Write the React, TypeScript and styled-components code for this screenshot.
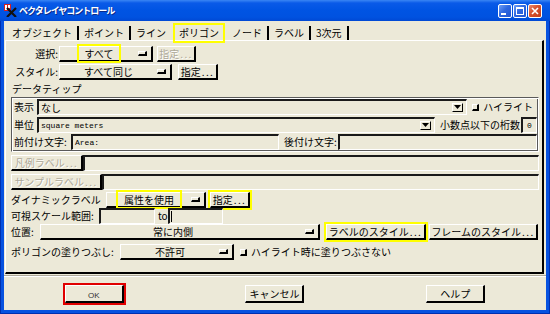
import React from 'react';
import styled, { createGlobalStyle, css } from 'styled-components';

const Global = createGlobalStyle`
  html, body { margin: 0; padding: 0; width: 550px; height: 314px; overflow: hidden; background: #fff; }
  #root { width: 550px; height: 314px; }
  * { box-sizing: border-box; }
`;

const JP = `"Noto Sans CJK JP", "Noto Sans", sans-serif`;
const MONO = `"Liberation Mono", "DejaVu Sans Mono", monospace`;

const raised = css`
  background: #ece9d8;
  border-style: solid;
  border-width: 1px 2px 2px 1px;
  border-color: #fff #000 #000 #fff;
`;

const sunken = css`
  background: #ece9d8;
  border-style: solid;
  border-width: 2px 1px 1px 2px;
  border-color: #1a1a1a #fff #fff #1a1a1a;
`;

const Window = styled.div`
  width: 550px;
  height: 314px;
  display: flex;
  flex-direction: column;
  background: #0752e0;
  box-shadow: inset 1px 0 0 #0030b0, inset -1px 0 0 #0030b0, inset 0 -1px 0 #0030b0;
  font-family: ${JP};
  font-size: 10px;
  color: #000;
`;

const TitleBar = styled.div`
  height: 21px;
  flex: none;
  display: flex;
  align-items: center;
  padding: 0 8px 0 4px;
  background: linear-gradient(180deg, #3a86f4 0px, #0a5ae8 3px, #0054e3 10px, #0052e0 17px, #0048d4 21px);
`;

const TitleText = styled.span`
  margin-left: 2px;
  color: #fff;
  font-weight: bold;
  font-size: 9px;
  letter-spacing: -1px;
  text-shadow: 1px 1px 0 #0a2a8a;
  flex: 1;
  white-space: nowrap;
`;

const CaptionGroup = styled.div`
  display: flex;
  gap: 1px;
`;

const CaptionBtn = styled.div<{ $close?: boolean }>`
  width: 14px;
  height: 14px;
  border: 1px solid #fff;
  border-radius: 2px;
  background: ${(p) =>
    p.$close
      ? 'linear-gradient(135deg, #e98a6e 0%, #d6502c 45%, #c2401c 100%)'
      : 'linear-gradient(135deg, #6f9ef5 0%, #2f68e0 45%, #1f54d2 100%)'};
  display: flex;
  align-items: center;
  justify-content: center;
`;

const Client = styled.div`
  flex: 1;
  margin: 0 4px 4px 4px;
  background: #ece9d8;
  display: flex;
  flex-direction: column;
`;

const TabsRow = styled.div`
  height: 19px;
  flex: none;
  display: flex;
  align-items: flex-end;
  padding-left: 3px;
`;

const Tab = styled.div<{ $sep?: boolean; $selected?: boolean }>`
  height: ${(p) => (p.$selected ? 20 : 14)}px;
  line-height: ${(p) => (p.$selected ? 20 : 14)}px;
  padding: 0 ${(p) => (p.$selected ? 6 : 5)}px;
  margin: 0 ${(p) => (p.$selected ? 2 : 0)}px ${(p) => (p.$selected ? -3 : 0)}px;
  border-right: ${(p) => (p.$sep ? '2px solid #000' : 'none')};
  box-shadow: ${(p) => (p.$selected ? 'inset 0 0 0 2px #ffff00' : 'none')};
  position: relative;
  z-index: ${(p) => (p.$selected ? 2 : 0)};
  white-space: nowrap;
`;

const Panel = styled.div`
  height: 234px;
  flex: none;
  margin: 0 2px 0 1px;
  border-style: solid;
  border-width: 1px 2px 2px 1px;
  border-color: #fff #000 #000 #fff;
  padding: 0 3px 0 5px;
  display: flex;
  flex-direction: column;
`;

const Row = styled.div<{ $mt?: number }>`
  display: flex;
  align-items: center;
  height: 16px;
  flex: none;
  margin-top: ${(p) => p.$mt ?? 0}px;
`;

const Label = styled.span<{ $w?: number; $ml?: number; $right?: boolean }>`
  white-space: nowrap;
  flex: none;
  line-height: 16px;
  ${(p) => (p.$w ? `width: ${p.$w}px;` : '')}
  margin-left: ${(p) => p.$ml ?? 0}px;
  text-align: ${(p) => (p.$right ? 'right' : 'left')};
`;

const SectionLabel = styled.div`
  height: 16px;
  line-height: 16px;
  padding-left: 1px;
  padding-top: 1px;
  flex: none;
`;

const OptionMenu = styled.div<{ $w: number; $ml?: number }>`
  ${raised};
  width: ${(p) => p.$w}px;
  margin-left: ${(p) => p.$ml ?? 0}px;
  height: 16px;
  flex: none;
  display: flex;
  align-items: center;
`;

const OptionTextArea = styled.div`
  flex: 1;
  display: flex;
  justify-content: center;
  align-items: center;
  height: 100%;
`;

const OptionText = styled.span<{ $mark?: boolean }>`
  white-space: nowrap;
  line-height: 13px;
  padding: 0 ${(p) => (p.$mark ? 5 : 0)}px;
  outline: ${(p) => (p.$mark ? '2px solid #ffff00' : 'none')};
  outline-offset: 1px;
`;

const Indicator = styled.span`
  width: 9px;
  height: 5px;
  flex: none;
  margin-right: 4px;
  border-style: solid;
  border-width: 1px 2px 2px 1px;
  border-color: #fff #000 #000 #fff;
`;

const PushButton = styled.div<{ $ml?: number; $w: number; $disabled?: boolean; $mark?: boolean }>`
  ${raised};
  height: 16px;
  line-height: 13px;
  width: ${(p) => p.$w}px;
  text-align: center;
  overflow: hidden;
  margin-left: ${(p) => p.$ml ?? 0}px;
  flex: none;
  white-space: nowrap;
  color: ${(p) => (p.$disabled ? '#aca899' : '#000')};
  text-shadow: ${(p) => (p.$disabled ? '1px 1px 0 #fff' : 'none')};
  outline: ${(p) => (p.$mark ? '2px solid #ffff00' : 'none')};
  outline-offset: 0;
`;

const Dots = styled.span`
  letter-spacing: 1.4px;
  margin-left: 1px;
`;

const Field = styled.div<{ $w?: number; $ml?: number }>`
  ${sunken};
  height: 16px;
  ${(p) => (p.$w ? `width: ${p.$w}px; flex: none;` : 'flex: 1; min-width: 0;')}
  margin-left: ${(p) => p.$ml ?? 0}px;
  display: flex;
  align-items: center;
  overflow: hidden;
`;

const FieldText = styled.span<{ $mono?: boolean; $center?: boolean }>`
  padding-left: 2px;
  white-space: nowrap;
  font-family: ${(p) => (p.$mono ? MONO : JP)};
  font-size: ${(p) => (p.$mono ? 8 : 10)}px;
  ${(p) => (p.$center ? 'flex: 1; text-align: center; padding-left: 0;' : '')}
`;

const Caret = styled.span`
  width: 1px;
  height: 11px;
  background: #000;
  margin-left: 1px;
`;

const ComboArrow = styled.span`
  width: 11px;
  height: 9px;
  margin-left: auto;
  margin-right: 3px;
  flex: none;
  border-style: solid;
  border-width: 1px;
  border-color: #fff #000 #000 #fff;
  display: flex;
  align-items: center;
  justify-content: center;
  background: #ece9d8;
`;

const Check = styled.span<{ $ml?: number }>`
  width: 7px;
  height: 7px;
  flex: none;
  margin-left: ${(p) => p.$ml ?? 0}px;
  margin-right: 4px;
  border-style: solid;
  border-width: 1px 2px 2px 1px;
  border-color: #fff #000 #000 #fff;
`;

const Frame = styled.div`
  margin-top: 1px;
  flex: none;
  border: 1px solid;
  border-color: #5a5a5a #fff #fff #5a5a5a;
  box-shadow: inset 1px 1px 0 #fff, inset -1px -1px 0 #5a5a5a;
  padding: 1px 1px 1px 2px;
  display: flex;
  flex-direction: column;
`;

const Separator = styled.div`
  margin-top: 1px;
  height: 2px;
  flex: none;
  border-top: 1px solid #aca899;
  border-bottom: 1px solid #fff;
`;

const ButtonRow = styled.div`
  flex: 1;
  display: flex;
  align-items: center;
  justify-content: space-around;
`;

const DialogButton = styled.div<{ $focus?: boolean }>`
  ${raised};
  width: 59px;
  height: 18px;
  line-height: 15px;
  text-align: center;
  white-space: nowrap;
  outline: ${(p) => (p.$focus ? '2px solid #e00000' : 'none')};
  outline-offset: 0;
`;

const OkText = styled.span`
  font-family: "Liberation Sans", Arial, sans-serif;
  font-size: 8px;
  color: #333;
`;

const TitleIcon = () => (
  <svg width="13" height="13" viewBox="0 0 13 13">
    <rect x="0" y="0" width="7" height="7" fill="#d42020" />
    <rect x="1" y="1" width="2" height="5" fill="#fff" />
    <rect x="4" y="1" width="2" height="3" fill="#fff" />
    <path d="M3 4 L12 13 M12 4 L3 13" stroke="#111" strokeWidth="2.2" />
  </svg>
);

const ArrowDown = () => (
  <svg width="7" height="5" viewBox="0 0 7 5">
    <path d="M0 0 H7 L3.5 4 Z" fill="#000" />
  </svg>
);

const Dlg = ({ children }: { children: React.ReactNode }) => (
  <>
    {children}
    <Dots>...</Dots>
  </>
);

export default function App() {
  return (
    <>
      <Global />
      <Window>
        <TitleBar>
          <TitleIcon />
          <TitleText>ベクタレイヤコントロール</TitleText>
          <CaptionGroup>
            <CaptionBtn>
              <svg width="12" height="12" viewBox="0 0 12 12">
                <rect x="2" y="8" width="5" height="2" fill="#fff" />
              </svg>
            </CaptionBtn>
            <CaptionBtn>
              <svg width="12" height="12" viewBox="0 0 12 12">
                <rect x="2.5" y="2.5" width="7" height="7" fill="none" stroke="#fff" strokeWidth="1" />
                <rect x="2" y="2" width="8" height="2" fill="#fff" />
              </svg>
            </CaptionBtn>
            <CaptionBtn $close>
              <svg width="12" height="12" viewBox="0 0 12 12">
                <path d="M3 3 L9 9 M9 3 L3 9" stroke="#fff" strokeWidth="1.6" />
              </svg>
            </CaptionBtn>
          </CaptionGroup>
        </TitleBar>
        <Client>
          <TabsRow>
            <Tab $sep>オブジェクト</Tab>
            <Tab $sep>ポイント</Tab>
            <Tab>ライン</Tab>
            <Tab $selected>ポリゴン</Tab>
            <Tab $sep>ノード</Tab>
            <Tab $sep>ラベル</Tab>
            <Tab $sep>3次元</Tab>
          </TabsRow>
          <Panel>
            <Row $mt={5}>
              <Label $w={47} $right>選択:</Label>
              <OptionMenu $w={94} $ml={1}>
                <OptionTextArea>
                  <OptionText $mark>すべて</OptionText>
                </OptionTextArea>
                <Indicator />
              </OptionMenu>
              <PushButton $ml={4} $w={39} $disabled>
                <Dlg>指定</Dlg>
              </PushButton>
            </Row>
            <Row $mt={2}>
              <Label $w={47} $right>スタイル:</Label>
              <OptionMenu $w={113} $ml={1}>
                <OptionTextArea>
                  <OptionText>すべて同じ</OptionText>
                </OptionTextArea>
                <Indicator />
              </OptionMenu>
              <PushButton $ml={6} $w={40}>
                <Dlg>指定</Dlg>
              </PushButton>
            </Row>
            <SectionLabel>データティップ</SectionLabel>
            <Frame>
              <Row>
                <Label $w={23}>表示</Label>
                <Field>
                  <FieldText>なし</FieldText>
                  <ComboArrow>
                    <ArrowDown />
                  </ComboArrow>
                </Field>
                <Check $ml={5} />
                <Label>ハイライト</Label>
                <Label $w={4} />
              </Row>
              <Row $mt={2}>
                <Label $w={23}>単位</Label>
                <Field>
                  <FieldText $mono>square meters</FieldText>
                  <ComboArrow>
                    <ArrowDown />
                  </ComboArrow>
                </Field>
                <Label $ml={5}>小数点以下の桁数</Label>
                <Field $w={16} $ml={1}>
                  <FieldText $mono $center>0</FieldText>
                </Field>
              </Row>
              <Row $mt={1}>
                <Label $w={57}>前付け文字:</Label>
                <Field $w={208}>
                  <FieldText $mono>Area:</FieldText>
                </Field>
                <Label $ml={5}>後付け文字:</Label>
                <Field $ml={1} />
              </Row>
            </Frame>
            <Row $mt={3}>
              <PushButton $w={72} $disabled>
                <Dlg>凡例ラベル</Dlg>
              </PushButton>
              <Field />
            </Row>
            <Row $mt={3}>
              <PushButton $w={91} $disabled>
                <Dlg>サンプルラベル</Dlg>
              </PushButton>
              <Field />
            </Row>
            <Row $mt={2}>
              <Label $w={95}>ダイナミックラベル</Label>
              <OptionMenu $w={100}>
                <OptionTextArea>
                  <OptionText $mark>属性を使用</OptionText>
                </OptionTextArea>
                <Indicator />
              </OptionMenu>
              <PushButton $ml={4} $w={40} $mark>
                <Dlg>指定</Dlg>
              </PushButton>
            </Row>
            <Row>
              <Label $w={88}>可視スケール範囲:</Label>
              <Field $w={56} />
              <Label $ml={3} $w={10}>
                to
              </Label>
              <Field $w={55}>
                <Caret />
              </Field>
            </Row>
            <Row>
              <Label $w={29}>位置:</Label>
              <OptionMenu $w={280}>
                <OptionTextArea>
                  <OptionText>常に内側</OptionText>
                </OptionTextArea>
                <Indicator />
              </OptionMenu>
              <PushButton $ml={6} $w={100} $mark>
                <Dlg>ラベルのスタイル</Dlg>
              </PushButton>
              <PushButton $ml={3} $w={109}>
                <Dlg>フレームのスタイル</Dlg>
              </PushButton>
            </Row>
            <Row $mt={4}>
              <Label $w={109}>ポリゴンの塗りつぶし:</Label>
              <OptionMenu $w={114}>
                <OptionTextArea>
                  <OptionText>不許可</OptionText>
                </OptionTextArea>
                <Indicator />
              </OptionMenu>
              <Check $ml={6} />
              <Label>ハイライト時に塗りつぶさない</Label>
            </Row>
          </Panel>
          <Separator />
          <ButtonRow>
            <DialogButton $focus>
              <OkText>OK</OkText>
            </DialogButton>
            <DialogButton>キャンセル</DialogButton>
            <DialogButton>ヘルプ</DialogButton>
          </ButtonRow>
        </Client>
      </Window>
    </>
  );
}
